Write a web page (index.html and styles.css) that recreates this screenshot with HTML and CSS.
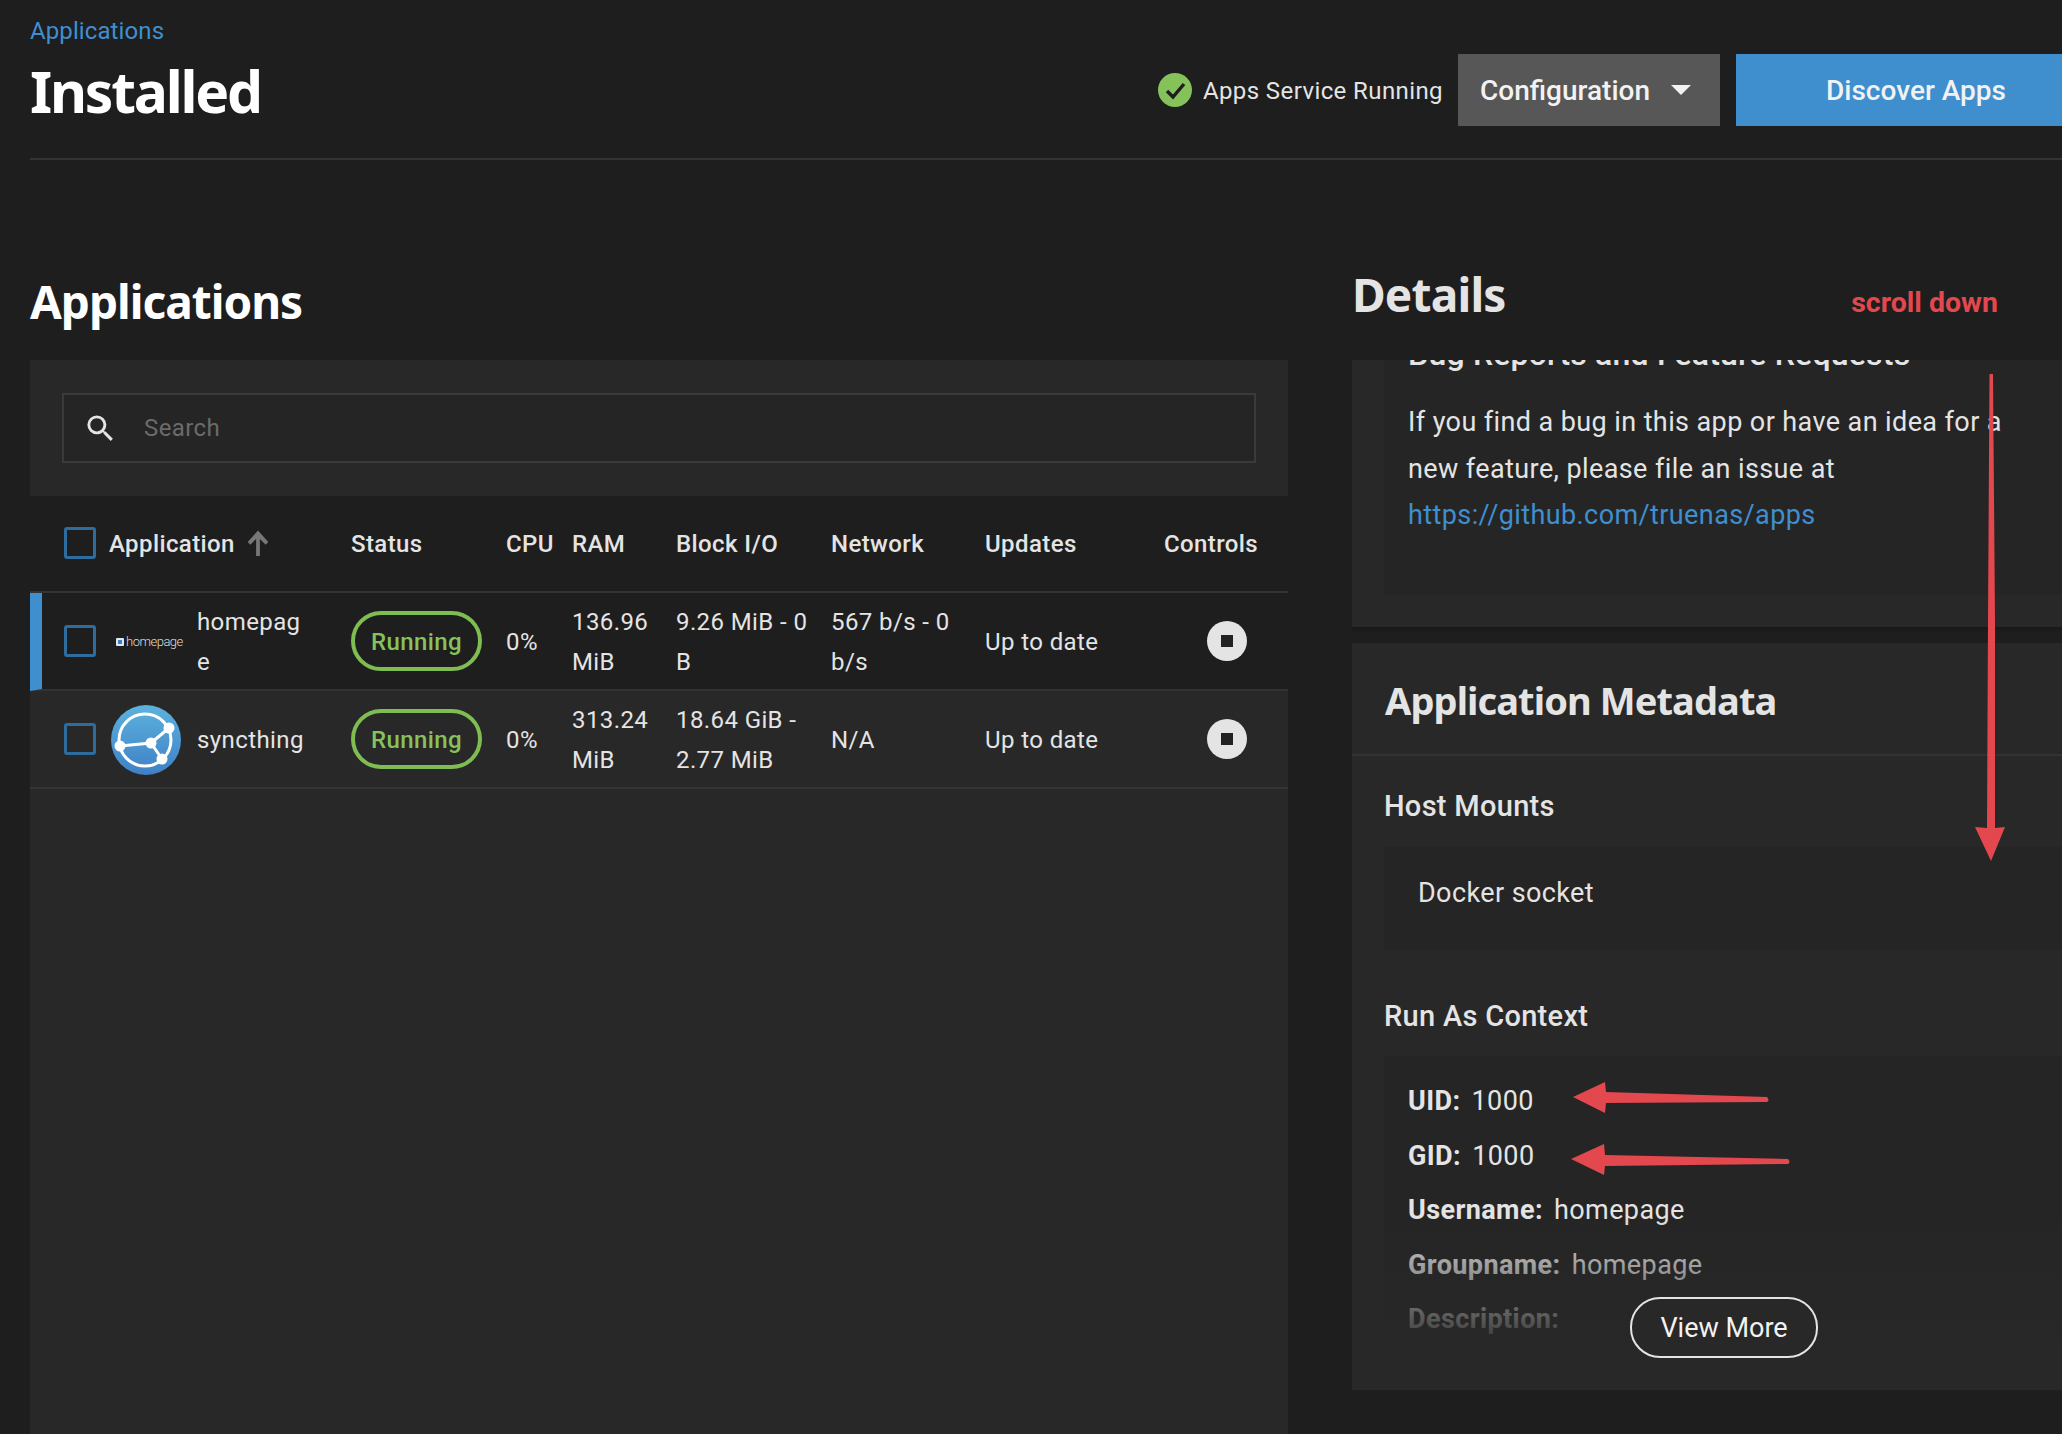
FILE: index.html
```html
<!DOCTYPE html>
<html lang="en">
<head>
  <meta charset="UTF-8" />
  <title>Installed - Applications</title>
  <link rel="stylesheet" href="styles.css">
</head>
<body>
  <header class="page-header">
    <div class="page-title">
      <a class="crumb">Applications</a>
      <h1>Installed</h1>
    </div>
    <div class="actions">
      <svg class="check" viewBox="0 0 34 34"><circle cx="17" cy="17" r="17" fill="#85c35a"/><path d="M9 18l6 6 11-13" fill="none" stroke="#1e1e1e" stroke-width="3.4"/></svg>
      <span class="service">Apps Service Running</span>
      <button class="btn btn-config">Configuration <i class="caret"></i></button>
      <button class="btn btn-discover">Discover Apps</button>
    </div>
  </header>

  <main class="columns">
    <section class="apps">
      <h2>Applications</h2>
      <div class="apps-card">
        <div class="search-wrap">
          <div class="search">
            <svg class="search-icon" viewBox="0 0 24 24"><path fill="#e4e4e4" d="M15.5 14h-.79l-.28-.27A6.471 6.471 0 0 0 16 9.5 6.5 6.5 0 1 0 9.5 16c1.61 0 3.09-.59 4.23-1.57l.27.28v.79l5 4.99L20.49 19l-4.99-5zm-6 0C7.01 14 5 11.99 5 9.5S7.01 5 9.5 5 14 7.01 14 9.5 11.99 14 9.5 14z"/></svg>
            <span class="placeholder">Search</span>
          </div>
        </div>

        <div class="row head">
          <span class="box"></span>
          <span class="th-app">Application
            <svg class="sort" viewBox="0 0 24 24"><path fill="#777" stroke="#777" stroke-width="1.2" d="M4 12l1.41 1.41L11 7.83V24h2V7.83l5.58 5.59L20 12 12 3z"/></svg>
          </span>
          <span>Status</span>
          <span>CPU</span>
          <span>RAM</span>
          <span>Block I/O</span>
          <span>Network</span>
          <span>Updates</span>
          <span>Controls</span>
        </div>

        <div class="row item selected">
          <span class="box"></span>
          <span class="app-name">
            <span class="logo logo-homepage"><i></i>homepage</span>
            <span class="name">homepage</span>
          </span>
          <span><span class="pill">Running</span></span>
          <span>0%</span>
          <span class="wrap">136.96 MiB</span>
          <span class="wrap">9.26 MiB - 0 B</span>
          <span class="wrap">567 b/s - 0 b/s</span>
          <span>Up to date</span>
          <span class="ctl"><span class="stop"><i></i></span></span>
        </div>

        <div class="row item">
          <span class="box"></span>
          <span class="app-name">
            <svg class="logo" viewBox="0 0 70 70">
              <defs><linearGradient id="sync" x1="0" y1="0" x2="0" y2="1"><stop offset="0" stop-color="#5cb2de"/><stop offset="1" stop-color="#3f80c6"/></linearGradient></defs>
              <circle cx="35" cy="35" r="35" fill="url(#sync)"/>
              <circle cx="34" cy="35" r="26" fill="none" stroke="#fff" stroke-width="3"/>
              <path d="M9 41L40 38L58 23M40 38L51 54" fill="none" stroke="#fff" stroke-width="3"/>
              <circle cx="9" cy="41" r="5.5" fill="#fff"/><circle cx="40" cy="38" r="5.5" fill="#fff"/><circle cx="58" cy="23" r="5.5" fill="#fff"/><circle cx="51" cy="54" r="5.5" fill="#fff"/>
            </svg>
            <span class="name">syncthing</span>
          </span>
          <span><span class="pill">Running</span></span>
          <span>0%</span>
          <span class="wrap">313.24 MiB</span>
          <span class="wrap">18.64 GiB - 2.77 MiB</span>
          <span>N/A</span>
          <span>Up to date</span>
          <span class="ctl"><span class="stop"><i></i></span></span>
        </div>
      </div>
    </section>

    <section class="details">
      <div class="details-head">
        <h2>Details</h2>
        <span class="note">scroll down</span>
      </div>
      <div class="scroller">
        <div class="card card-notes">
          <div class="notes">
            <h4>Bug Reports and Feature Requests</h4>
            <p>If you find a bug in this app or have an idea for a<br>new feature, please file an issue at<br><a>https://github.com/truenas/apps</a></p>
          </div>
        </div>
        <div class="card card-meta">
          <h3>Application Metadata</h3>
          <div class="meta-body">
            <h5>Host Mounts</h5>
            <div class="inner mounts">Docker socket</div>
            <h5 class="ctx-title">Run As Context</h5>
            <div class="inner context">
              <div><b>UID:</b> 1000</div>
              <div><b>GID:</b> 1000</div>
              <div><b>Username:</b> homepage</div>
              <div><b>Groupname:</b> homepage</div>
              <div><b>Description:</b></div>
              <div class="fade"></div>
              <button class="more">View More</button>
            </div>
          </div>
        </div>
      </div>
    </section>
  </main>

  <!-- hand drawn red arrows on top of the screenshot -->
  <svg class="marks" viewBox="0 0 2062 1434">
    <path fill="#e2484d" d="M1989.5 374L1993 374L1995 620L1995 828L2005 827L1991 861L1975 827L1987 828L1988 620Z"/>
    <path fill="#e2484d" d="M1573 1097L1605 1082L1606 1092L1767 1097Q1770 1100 1767 1102L1606 1103L1605 1113Z"/>
    <path fill="#e2484d" d="M1571 1159L1604 1144L1605 1155L1788 1159Q1791 1162 1788 1164L1605 1166L1604 1175Z"/>
  </svg>
</body>
</html>
```

FILE: styles.css
```css
* {
  box-sizing: border-box;
}

html, body {
  margin: 0;
  height: 1434px;
  overflow: hidden;
}

body {
  position: relative;
  background-color: #1e1e1e;
  color: #e4e4e4;
  font-family: Roboto, sans-serif;
  font-size: 24px;
  letter-spacing: 0.4px;
  padding-left: 30px;
}

h1, h2, h3 {
  font-family: "Noto Sans", sans-serif;
  font-weight: 700;
  margin: 0;
}

/* header */
.page-header {
  display: flex;
  justify-content: space-between;
  height: 160px;
  border-bottom: 2px solid #333;
}

.page-title {
  padding-top: 15px;
}

.crumb {
  display: block;
  color: #3f8fcf;
  font-size: 24px;
  line-height: 32px;
  letter-spacing: 0.1px;
}

h1 {
  color: #fff;
  font-size: 57px;
  letter-spacing: -2.2px;
  line-height: 78px;
  margin-top: 5px;
}

.actions {
  display: flex;
  align-items: center;
  height: 72px;
  margin-top: 54px;
}

.check {
  width: 34px;
  height: 34px;
  margin-right: 11px;
}

.service {
  margin: 2px 15px 0 0;
}

.btn {
  height: 72px;
  border: none;
  color: #f2f2f2;
  font-family: Roboto, sans-serif;
  font-size: 28px;
  font-weight: 500;
}

.btn-config {
  display: flex;
  align-items: center;
  width: 262px;
  padding: 0 0 0 22px;
  background-color: #575757;
  margin-right: 16px;
}

.caret {
  width: 0;
  height: 0;
  margin-left: 21px;
  border-left: 10px solid transparent;
  border-right: 10px solid transparent;
  border-top: 10px solid #f2f2f2;
}

.btn-discover {
  width: 326px;
  padding: 0 0 0 34px;
  background-color: #3f8fcf;
}

/* columns */
.columns {
  display: flex;
  gap: 64px;
}

.apps {
  width: 1258px;
  flex: none;
}

.apps h2 {
  color: #fff;
  font-size: 46px;
  letter-spacing: -1px;
  line-height: 60px;
  padding-top: 111px;
  height: 200px;
}

.apps-card {
  background-color: #282828;
  height: 1074px;
}

.search-wrap {
  padding: 33px 32px;
  height: 136px;
}

.search {
  display: flex;
  align-items: center;
  height: 70px;
  border: 2px solid #3a3a3a;
  background-color: #252525;
  padding-left: 19px;
}

.search-icon {
  width: 35px;
  height: 35px;
  margin-right: 26px;
}

.placeholder {
  color: #6b6b6b;
}

.row {
  display: grid;
  grid-template-columns: 45px 242px 155px 66px 104px 155px 154px 179px 92px;
  align-items: center;
  padding-left: 34px;
}

.row.head {
  height: 97px;
  background-color: #1e1e1e;
  border-bottom: 2px solid #333;
  font-weight: 500;
  padding-top: 1px;
}

.row.head .box {
  margin-top: -3px;
}

.th-app {
  display: flex;
  align-items: center;
}

.sort {
  width: 28px;
  height: 28px;
  margin: -4px 0 0 9px;
}

.item {
  height: 98px;
  border-bottom: 2px solid #333;
  line-height: 40px;
  padding-top: 1px;
}

.item .box {
  margin-top: -1px;
}

.item.selected {
  background-color: #1e1e1e;
  border-left: 12px solid #3f8fcf;
  padding-left: 22px;
}

.box {
  display: block;
  width: 32px;
  height: 32px;
  border: 3px solid #2f6c9e;
  border-radius: 3px;
}

.app-name {
  display: flex;
  align-items: center;
}

.logo {
  flex: none;
  width: 70px;
  height: 70px;
  margin: 0 16px 0 2px;
}

.logo-homepage {
  display: flex;
  align-items: center;
  color: #ddd;
  font-size: 13px;
  font-weight: 300;
  letter-spacing: -0.5px;
  margin-right: 16px;
  padding-left: 5px;
}

.logo-homepage i {
  flex: none;
  width: 8px;
  height: 8px;
  margin-right: 2px;
  border: 2px solid #dfe8f2;
  border-radius: 1px;
  background-color: #3f7fc0;
}

.name {
  width: 110px;
  word-break: break-all;
}

.pill {
  display: block;
  width: 131px;
  height: 60px;
  margin-top: -1px;
  border: 4px solid #7fbc52;
  border-radius: 30px;
  color: #85c35a;
  text-align: center;
  line-height: 54px;
  font-weight: 500;
}

.wrap {
  padding-right: 10px;
}

.ctl {
  padding-left: 43px;
}

.stop {
  display: flex;
  align-items: center;
  justify-content: center;
  width: 40px;
  height: 40px;
  margin-top: -1px;
  border-radius: 50%;
  background-color: #e4e4e4;
}

.stop i {
  width: 12px;
  height: 12px;
  background-color: #222;
}

/* details */
.details {
  flex: 1;
  min-width: 0;
}

.details-head {
  display: flex;
  justify-content: space-between;
  height: 200px;
  padding-top: 104px;
}

.details-head h2 {
  font-size: 46px;
  letter-spacing: -0.8px;
  line-height: 60px;
}

.note {
  color: #e2484d;
  font-size: 28.5px;
  font-weight: 700;
  letter-spacing: 0;
  margin: 22px 64px 0 0;
}

.scroller {
  height: 1074px;
  overflow: hidden;
}

.card {
  background-color: #282828;
}

.card-notes {
  height: 267px;
  overflow: hidden;
  padding-left: 32px;
  box-shadow: 0 2px 3px #181818;
}

/* the negative margin on h4 pulls this box up too, the card is scrolled */
.notes {
  height: 259px;
  background-color: #252525;
  padding-left: 24px;
}

.notes h4 {
  font-size: 32px;
  font-weight: 500;
  letter-spacing: 0.2px;
  line-height: 36px;
  margin: -24px 0 0;
}

.notes p {
  font-size: 27px;
  line-height: 46.5px;
  margin: 27px 0 0;
}

.notes a {
  color: #3f8fcf;
}

.card-meta {
  height: 747px;
  margin-top: 16px;
}

.card-meta h3 {
  font-size: 38px;
  letter-spacing: -0.9px;
  line-height: 50px;
  height: 113px;
  padding: 32px 0 0 33px;
  border-bottom: 2px solid #333;
}

.meta-body {
  padding-left: 32px;
}

h5 {
  font-size: 29px;
  font-weight: 500;
  letter-spacing: 0.3px;
  line-height: 36px;
  margin: 0;
  padding-top: 32px;
  height: 91px;
}

.ctx-title {
  height: 106px;
  padding-top: 48px;
}

.inner {
  background-color: #252525;
}

.mounts {
  height: 103px;
  padding: 26px 0 0 34px;
  font-size: 27px;
  line-height: 40px;
}

.context {
  position: relative;
  height: 334px;
  padding: 18px 0 0 24px;
  font-size: 27px;
  line-height: 54.5px;
}

.context b {
  font-weight: 700;
  margin-right: 4px;
}

.fade {
  position: absolute;
  left: 0;
  right: 0;
  bottom: 0;
  height: 175px;
  background: linear-gradient(to bottom, rgba(40, 40, 40, 0), #282828 80%);
}

.more {
  position: absolute;
  left: 246px;
  top: 241px;
  width: 188px;
  height: 61px;
  border: 2px solid #e4e4e4;
  border-radius: 30px;
  background-color: #282828;
  color: #f2f2f2;
  font-family: Roboto, sans-serif;
  font-size: 27px;
  font-weight: 400;
}

.marks {
  position: absolute;
  left: 0;
  top: 0;
  width: 2062px;
  height: 1434px;
  pointer-events: none;
}
```
